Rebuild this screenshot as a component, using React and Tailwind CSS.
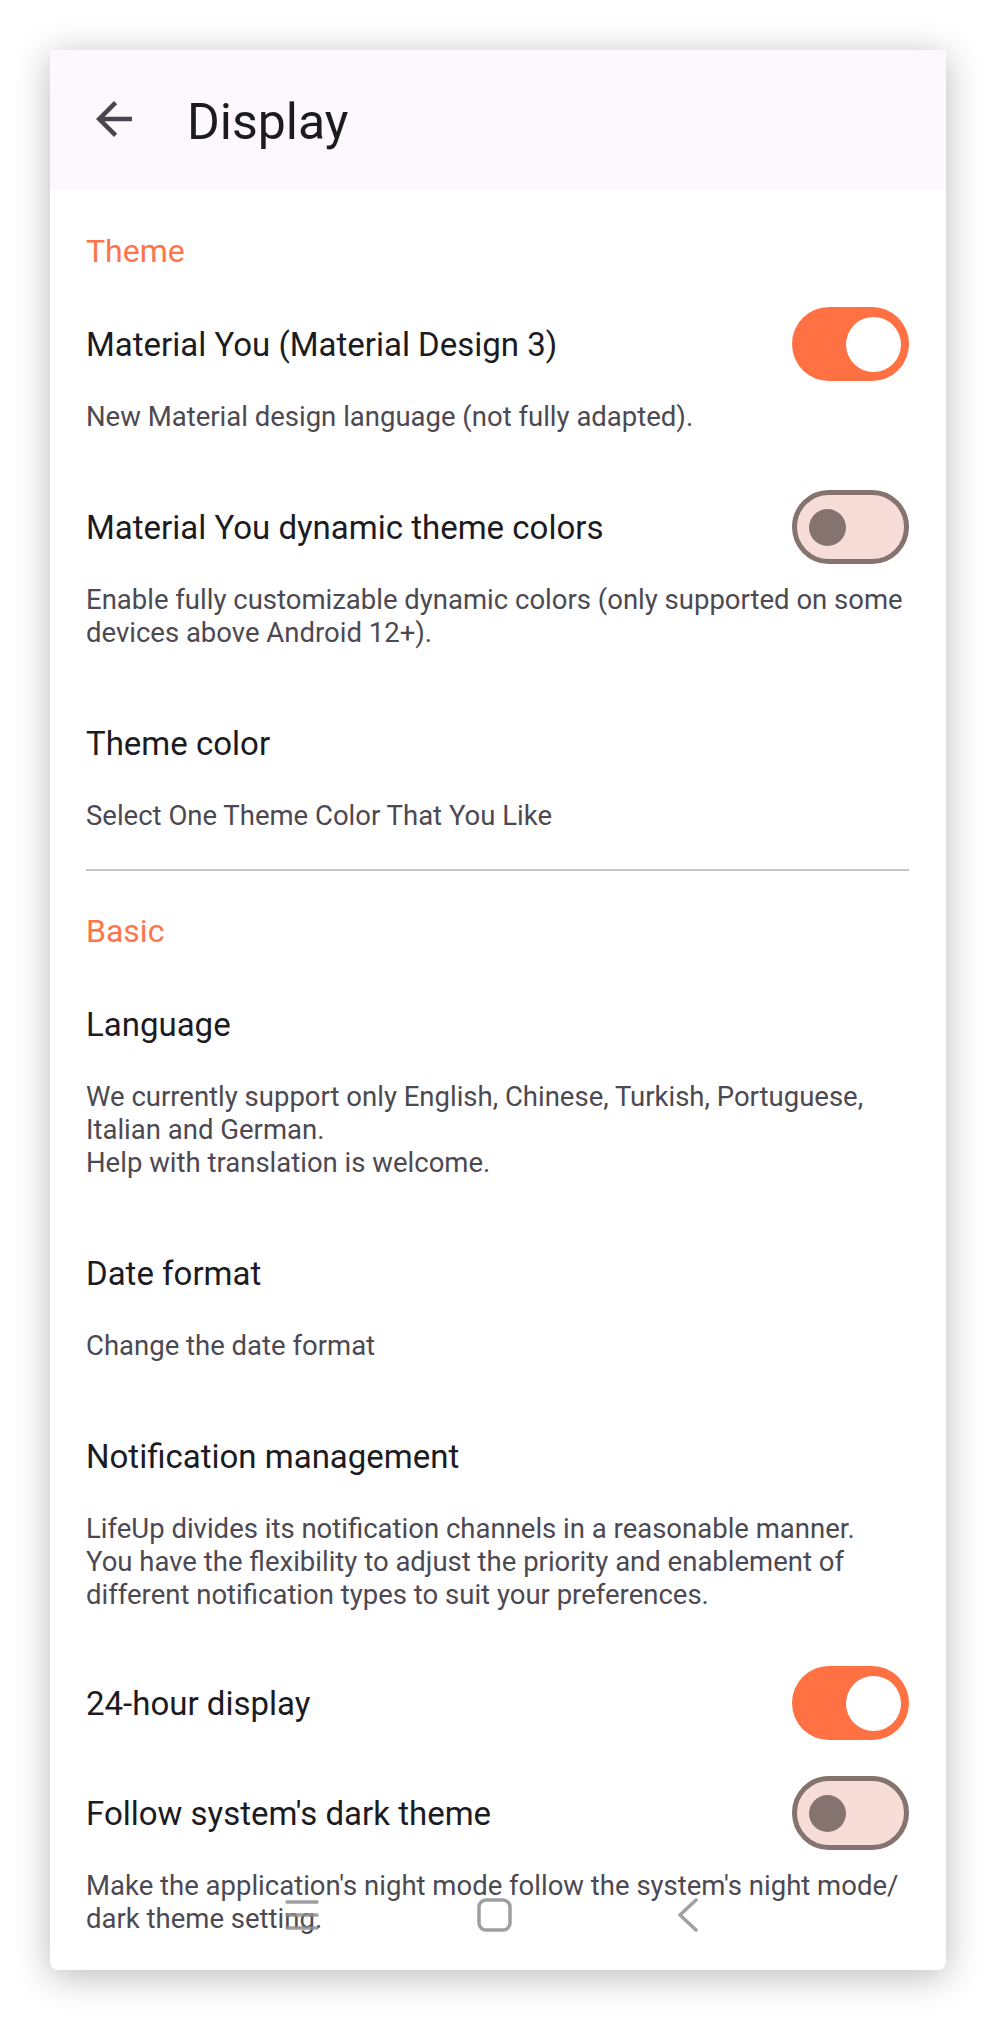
import React from 'react';

const Toggle = ({ on }) => {
  if (on) {
    return (
      <div className="w-[117px] h-[74px] rounded-full bg-[#ff7043] flex items-center justify-end pr-[8px] shrink-0">
        <div className="w-[55px] h-[55px] rounded-full bg-white"></div>
      </div>
    );
  }
  return (
    <div className="w-[117px] h-[74px] rounded-full bg-[#f6ddd7] border-[5px] border-[#85736f] flex items-center pl-[12px] shrink-0">
      <div className="w-[37px] h-[37px] rounded-full bg-[#85736f]"></div>
    </div>
  );
};

const Category = ({ title, first }) => (
  <div className={`pb-[7px] ${first ? 'pt-[41px]' : 'pt-[40px]'}`}>
    <div className="text-[32px] leading-[40px] text-[#ff7449]">{title}</div>
  </div>
);

const Pref = ({ title, lines, toggle, className = 'pt-[29px] pb-[28px]' }) => (
  <div className={className}>
    <div className="flex items-center justify-between h-[74px]">
      <div className="text-[33px] leading-[44px] text-[#1c1b1f] pt-[2px] whitespace-nowrap">{title}</div>
      {toggle !== undefined && <Toggle on={toggle} />}
    </div>
    {lines && (
      <div className="mt-[19px] text-[27.5px] leading-[33px] text-[#4c4952] whitespace-nowrap">
        {lines.map((l, i) => (
          <div key={i}>{l}</div>
        ))}
      </div>
    )}
  </div>
);

const NavBar = () => (
  <div className="absolute left-0 top-[1848px] w-full h-[34px] pointer-events-none">
    {/* recents */}
    <svg className="absolute left-[234px] top-0" width="36" height="34" viewBox="0 0 36 34">
      <g stroke="#8e8e8e" strokeOpacity="0.85" strokeWidth="3.5" strokeLinecap="round">
        <line x1="3" y1="4" x2="33" y2="4" />
        <line x1="3" y1="17" x2="33" y2="17" />
        <line x1="3" y1="30" x2="33" y2="30" />
      </g>
    </svg>
    {/* home */}
    <svg className="absolute left-[426px] top-0" width="37" height="34" viewBox="0 0 37 34">
      <rect x="3" y="2" width="31" height="30" rx="7" fill="none" stroke="#8e8e8e" strokeOpacity="0.85" strokeWidth="3.5" />
    </svg>
    {/* back */}
    <svg className="absolute left-[624px] top-0" width="28" height="34" viewBox="0 0 28 34">
      <polyline points="22,2 6,17 22,32" fill="none" stroke="#8e8e8e" strokeOpacity="0.85" strokeWidth="3.5" strokeLinecap="round" strokeLinejoin="round" />
    </svg>
  </div>
);

export default function App() {
  return (
    <div className="w-[996px] h-[2021px] bg-white pt-[50px]" style={{ fontFamily: 'Roboto, "Noto Sans", sans-serif' }}>
      <div className="relative ml-[50px] w-[896px] h-[1920px] bg-white rounded-b-[8px] overflow-hidden shadow-[0_6px_36px_rgba(0,0,0,0.28)]">
        {/* Toolbar */}
        <div className="h-[140px] bg-[#fdf8fc] flex items-center pl-[37px]">
          <svg width="54" height="54" viewBox="0 0 24 24" className="-mt-[2px]">
            <path fill="#49454f" d="M20 11H7.83l5.59-5.59L12 4l-8 8 8 8 1.41-1.41L7.83 13H20v-2z" />
          </svg>
          <div className="ml-[46px] text-[50px] leading-[56px] text-[#1c1b1f] pt-[3px]">Display</div>
        </div>

        {/* Settings list */}
        <div className="pl-[36px] pr-[37px]">
          <Category title="Theme" first />
          <Pref
            title="Material You (Material Design 3)"
            toggle={true}
            lines={['New Material design language (not fully adapted).']}
          />
          <Pref
            title="Material You dynamic theme colors"
            toggle={false}
            lines={['Enable fully customizable dynamic colors (only supported on some', 'devices above Android 12+).']}
          />
          <Pref title="Theme color" lines={['Select One Theme Color That You Like']} />
          <div className="mt-[9px] h-[2px] bg-[#cac5cc]"></div>

          <Category title="Basic" />
          <Pref
            title="Language"
            lines={[
              'We currently support only English, Chinese, Turkish, Portuguese,',
              'Italian and German.',
              'Help with translation is welcome.',
            ]}
          />
          <Pref title="Date format" lines={['Change the date format']} />
          <Pref
            title="Notification management"
            lines={[
              'LifeUp divides its notification channels in a reasonable manner.',
              'You have the flexibility to adjust the priority and enablement of',
              'different notification types to suit your preferences.',
            ]}
          />
          <Pref title="24-hour display" toggle={true} className="pt-[27px] pb-[7px]" />
          <Pref
            title="Follow system's dark theme"
            toggle={false}
            lines={["Make the application's night mode follow the system's night mode/", 'dark theme setting.']}
          />
        </div>

        <NavBar />
      </div>
    </div>
  );
}
